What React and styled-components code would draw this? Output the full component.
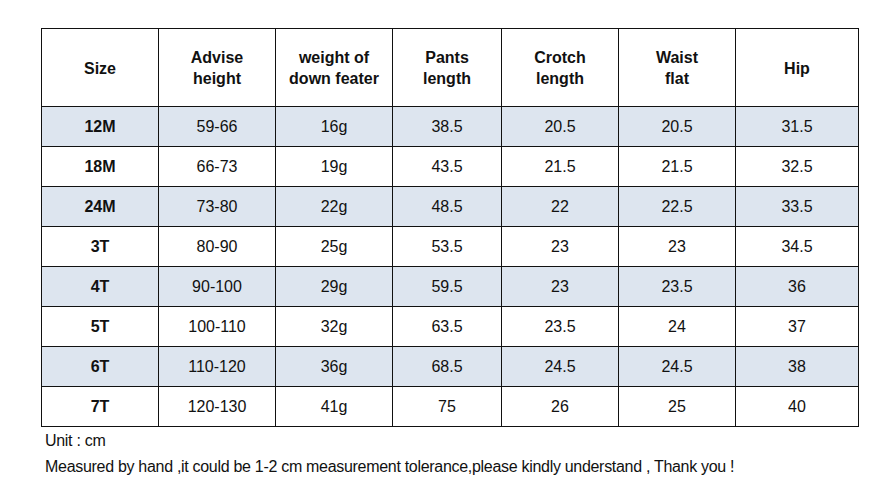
import React from 'react';
import styled, { createGlobalStyle } from 'styled-components';

const GlobalStyle = createGlobalStyle`
  body {
    margin: 0;
    background: #fff;
    font-family: "Liberation Sans", Arial, sans-serif;
  }
`;

const Page = styled.div`
  width: 895px;
  height: 500px;
  padding: 28px 0 0 41px;
  box-sizing: border-box;
`;

const Table = styled.table`
  border-collapse: collapse;
  table-layout: fixed;
  width: 818px;
`;

const Cell = styled.td`
  border: 1px solid #111;
  text-align: center;
  vertical-align: middle;
  padding: 0;
  height: 39px;
  font-size: 16px;
  color: #111;
  font-weight: ${p => (p.$bold ? 'bold' : 'normal')};
  background: ${p => (p.$shade ? '#dde5ef' : '#fff')};
`;

const HeadCell = styled.th`
  border: 1px solid #111;
  text-align: center;
  vertical-align: middle;
  padding: 1px 0 0;
  height: 76px;
  font-size: 16px;
  line-height: 21px;
  font-weight: bold;
  color: #111;
  background: #fff;
`;

const Notes = styled.div`
  padding: 1px 0 0 4px;
  font-size: 16px;
  color: #111;
  letter-spacing: -0.3px;
  line-height: 26px;
`;

const widths = [117, 117, 117, 109, 117, 117, 123];

const headers = [
  ['Size'],
  ['Advise', 'height'],
  ['weight of', 'down feater'],
  ['Pants', 'length'],
  ['Crotch', 'length'],
  ['Waist', 'flat'],
  ['Hip'],
];

const rows = [
  ['12M', '59-66', '16g', '38.5', '20.5', '20.5', '31.5'],
  ['18M', '66-73', '19g', '43.5', '21.5', '21.5', '32.5'],
  ['24M', '73-80', '22g', '48.5', '22', '22.5', '33.5'],
  ['3T', '80-90', '25g', '53.5', '23', '23', '34.5'],
  ['4T', '90-100', '29g', '59.5', '23', '23.5', '36'],
  ['5T', '100-110', '32g', '63.5', '23.5', '24', '37'],
  ['6T', '110-120', '36g', '68.5', '24.5', '24.5', '38'],
  ['7T', '120-130', '41g', '75', '26', '25', '40'],
];

export default function App() {
  return (
    <Page>
      <GlobalStyle />
      <Table>
        <colgroup>
          {widths.map((w, i) => (
            <col key={i} style={{ width: w }} />
          ))}
        </colgroup>
        <thead>
          <tr>
            {headers.map((h, i) => (
              <HeadCell key={i}>
                {h.map((line, j) => (
                  <div key={j}>{line}</div>
                ))}
              </HeadCell>
            ))}
          </tr>
        </thead>
        <tbody>
          {rows.map((r, i) => (
            <tr key={r[0]}>
              {r.map((v, j) => (
                <Cell key={j} $bold={j === 0} $shade={i % 2 === 0}>
                  {v}
                </Cell>
              ))}
            </tr>
          ))}
        </tbody>
      </Table>
      <Notes>
        <div>Unit : cm</div>
        <div>Measured by hand ,it could be 1-2 cm measurement tolerance,please kindly understand , Thank you !</div>
      </Notes>
    </Page>
  );
}
